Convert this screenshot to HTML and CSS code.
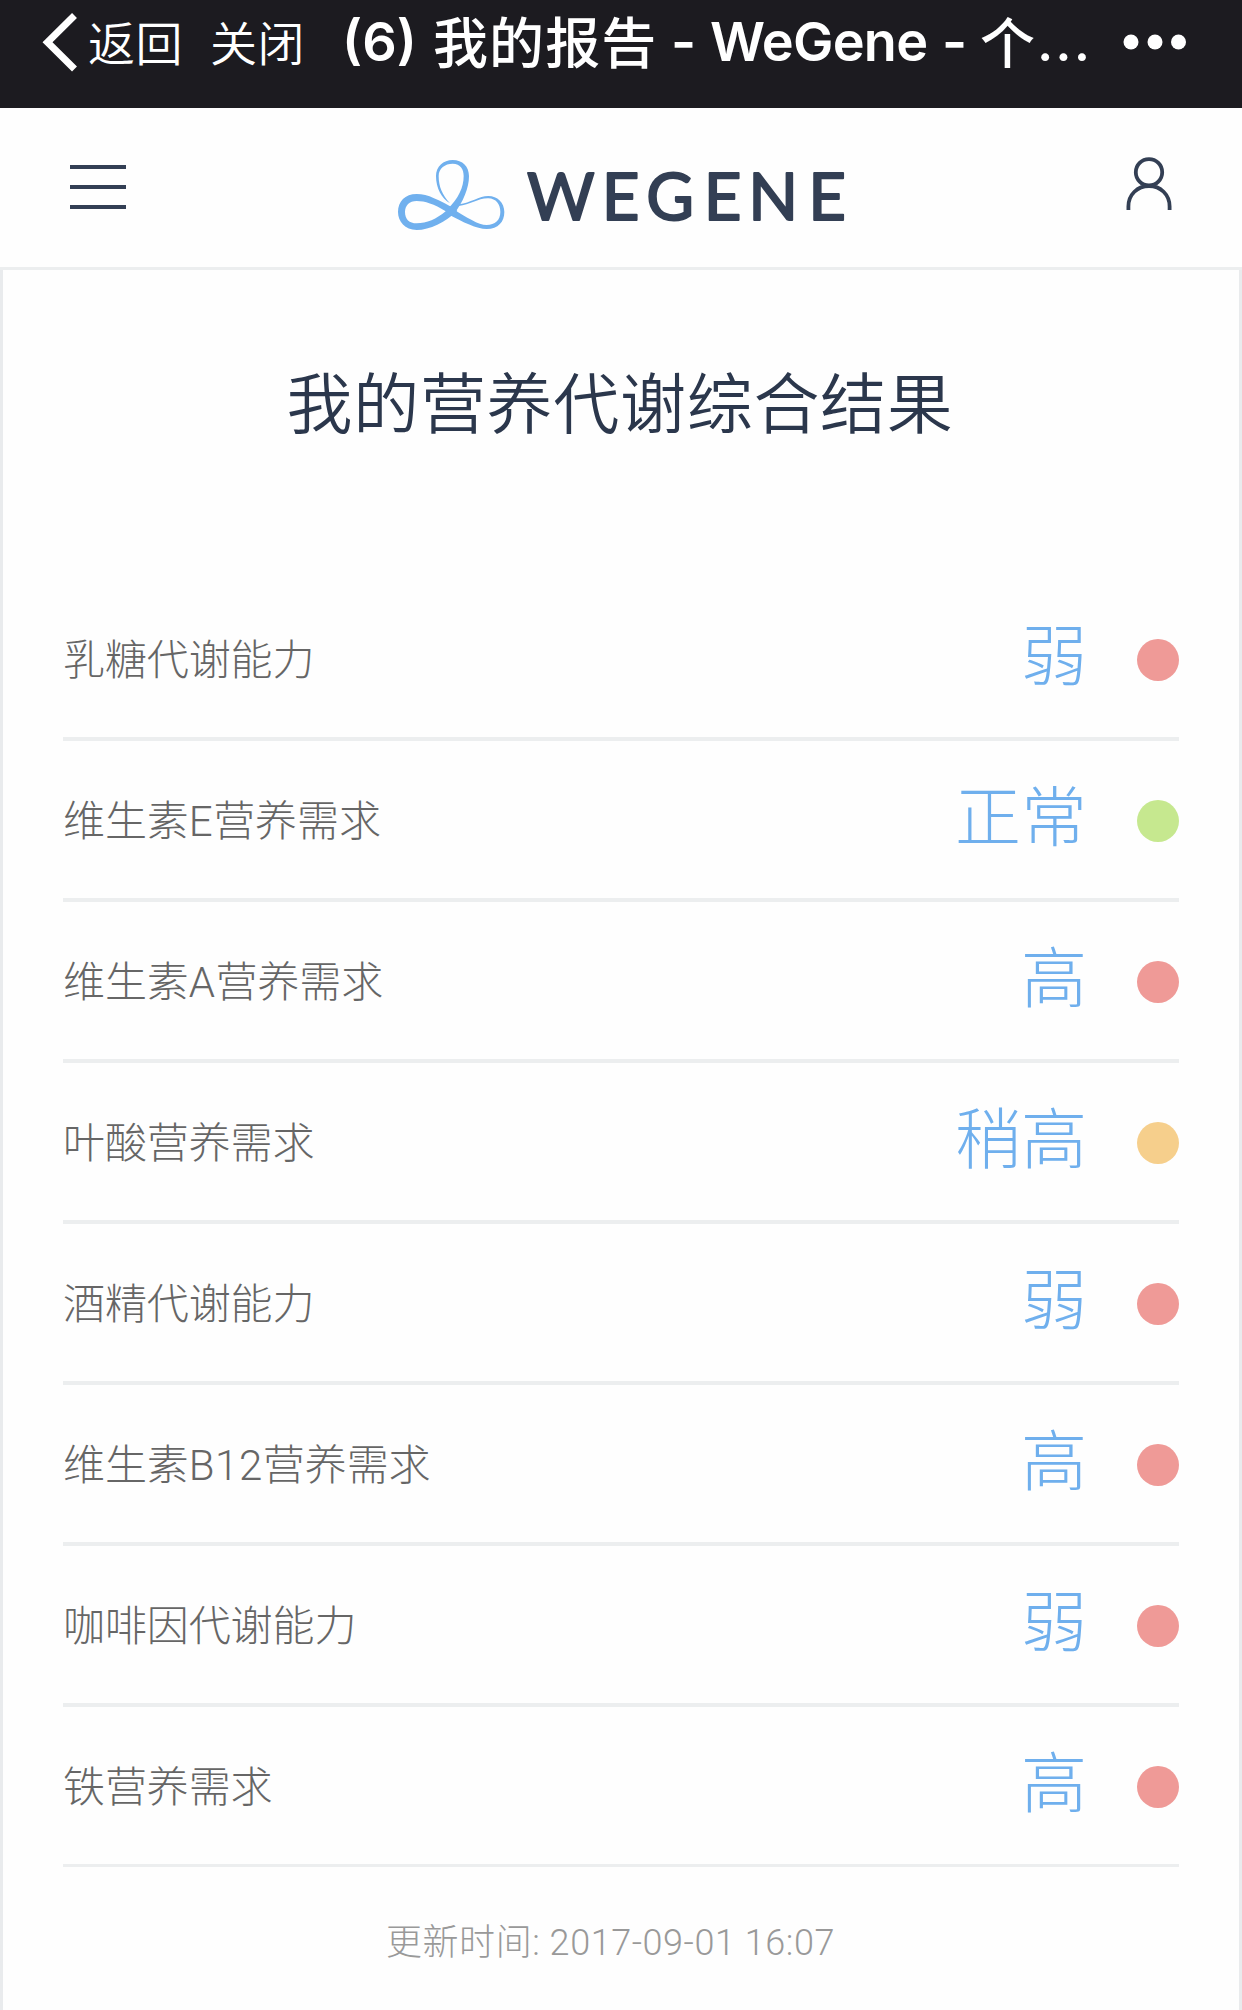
FILE: index.html
```html
<!DOCTYPE html>
<html lang="zh-CN">
<head>
    <meta charset="UTF-8">
    <meta name="viewport" content="width=device-width, initial-scale=1.0">
    <title>(6) 我的报告 - WeGene</title>
    <link rel="stylesheet" href="styles.css">
</head>
<body>
    <div class="navbar">
        <svg class="back-icon" width="36" height="60" viewBox="0 0 36 60"><path d="M33.5 3.5L6.5 30.2L33.5 57" fill="none" stroke="#fff" stroke-width="7"/></svg>
        <span class="nav-link">返回</span>
        <span class="nav-link nav-close">关闭</span>
        <div class="nav-title"><span class="nav-count">(6)</span><span class="nav-cn">我的报告</span><span class="nav-dash">-</span><span class="nav-en">WeGene</span><span class="nav-dash2">-</span><span class="nav-cn nav-last">个</span><span class="nav-dots">...</span></div>
        <svg class="more-icon" width="64" height="16" viewBox="0 0 64 16" fill="#fff"><circle cx="8" cy="8" r="7.5"/><circle cx="32" cy="8" r="7.5"/><circle cx="55.5" cy="8" r="7.5"/></svg>
    </div>

    <header class="header">
        <div class="menu-icon"><i></i><i></i><i></i></div>
        <svg class="logo" width="480" height="110" viewBox="0 0 1440 330">
            <g fill="#70b0ee">
                <path fill-rule="evenodd" d="M232 213C195 247 150 270 110 270C75 269 54 245 54 216C54 185 75 162 110 162C145 162 175 180 226 207ZM197 214C162 192 135 183 110 183C88 183 75 197 75 216C75 238 88 250 110 250C140 250 170 237 197 214Z"/>
                <path d="M203 222C250 247 290 267 320 267C355 267 373 245 373 216C373 188 352 168 325 168C298 168 270 189 238 193L236 198C270 195 295 174 325 175C348 176 361 192 361 216C361 240 345 255 320 255C295 255 260 232 218 207Z"/>
                <path d="M222 222C250 184 267 145 267 108C267 80 248 60 218 60C190 60 168 80 168 108C168 145 185 175 210 190C187 165 176 140 176 108C176 85 195 71 218 71C242 71 251 88 251 108C251 143 235 175 203 207Z"/>
            </g>
            <text class="logo-text" y="241" x="441 665 799 971 1105 1285">WEGENE</text>
        </svg>
        <svg class="user-icon" width="48" height="56" viewBox="0 0 48 56" fill="none" stroke="#333f54" stroke-width="3.8"><circle cx="24" cy="17.3" r="13.2"/><path d="M3.4 55V51.5C3.4 39.5 12.5 31 24 31S44.6 39.5 44.6 51.5V55"/></svg>
    </header>

    <div class="report">
        <h1 class="report-title">我的营养代谢综合结果</h1>
        <ul class="result-list">
            <li><span class="name">乳糖代谢能力</span><span class="value">弱</span><i class="dot red"></i></li>
            <li><span class="name">维生素<b>E</b>营养需求</span><span class="value">正常</span><i class="dot green"></i></li>
            <li><span class="name">维生素<b>A</b>营养需求</span><span class="value">高</span><i class="dot red"></i></li>
            <li><span class="name">叶酸营养需求</span><span class="value">稍高</span><i class="dot orange"></i></li>
            <li><span class="name">酒精代谢能力</span><span class="value">弱</span><i class="dot red"></i></li>
            <li><span class="name">维生素<b>B12</b>营养需求</span><span class="value">高</span><i class="dot red"></i></li>
            <li><span class="name">咖啡因代谢能力</span><span class="value">弱</span><i class="dot red"></i></li>
            <li><span class="name">铁营养需求</span><span class="value">高</span><i class="dot red"></i></li>
        </ul>
        <p class="update-time">更新时间: 2017-09-01 16:07</p>
    </div>
</body>
</html>
```
FILE: styles.css
```css
* {
    box-sizing: border-box;
}
body {
    margin: 0;
    font-family: Roboto, "Noto Sans CJK SC", sans-serif;
    font-weight: 300;
    background: #fefefe;
    color: #666;
}
.navbar {
    display: flex;
    align-items: center;
    height: 108px;
    padding: 0 0 24px 41px;
    background: #1c1b20;
    color: #fff;
    white-space: nowrap;
}
.back-icon {
    flex: none;
}
.nav-link {
    margin-left: 11px;
    width: 98px;
    padding-bottom: 2px;
    font-family: "Noto Sans CJK SC", sans-serif;
    font-size: 47px;
    line-height: 84px;
    letter-spacing: .5px;
    font-weight: 350;
}
.nav-close {
    margin-left: 24px;
}
.nav-title {
    display: flex;
    align-items: center;
    width: 780px;
    margin-left: 34px;
    font-family: Inter, "Noto Sans CJK SC", sans-serif;
    font-size: 54px;
    line-height: 84px;
    font-weight: 600;
}
.nav-count {
    width: 91px;
}
.nav-cn {
    width: 238px;
    padding-bottom: 7px;
    font-family: "Noto Sans CJK SC", sans-serif;
    font-size: 55px;
    letter-spacing: 1.1px;
    font-weight: 500;
}
.nav-dash {
    width: 39px;
}
.nav-en {
    width: 232px;
    letter-spacing: -.7px;
}
.nav-dash2 {
    width: 38px;
}
.nav-last {
    width: 57px;
}
.nav-dots {
    font-weight: 500;
    letter-spacing: 2px;
}
.more-icon {
    flex: none;
    margin-left: 1px;
}
.header {
    display: flex;
    align-items: flex-start;
    height: 162px;
    padding: 32px 0 0 70px;
    border-bottom: 3px solid #eceeef;
}
.menu-icon {
    display: flex;
    flex-direction: column;
    gap: 16px;
    width: 56px;
    margin-top: 25px;
}
.menu-icon i {
    height: 4px;
    background: #333f54;
}
.logo {
    margin-left: 254px;
}
.logo-text {
    font-family: Lato, sans-serif;
    font-size: 196px;
    font-weight: 400;
    fill: #333f54;
    stroke: #333f54;
    stroke-width: 6px;
    stroke-linejoin: round;
}
.user-icon {
    margin: 15px 0 0 265px;
}
.report {
    height: 1740px;
    padding: 81px 60px 0;
    border: 3px solid #e9ebed;
    border-width: 0 3px;
}
.report-title {
    margin: 0;
    font-family: "Noto Sans CJK SC", sans-serif;
    font-size: 66px;
    line-height: 96px;
    letter-spacing: .7px;
    font-weight: 350;
    text-align: center;
    text-indent: -2px;
    color: #2b374c;
}
.result-list {
    list-style: none;
    margin: 133px 0 0;
    padding: 0;
}
.result-list li {
    display: flex;
    height: 161px;
    border-bottom: 4px solid #eceeef;
}
.result-list li:last-child {
    height: 160px;
    border-bottom-width: 3px;
}
.name {
    flex: 1;
    padding-top: 47px;
    font-family: "Noto Sans CJK SC", sans-serif;
    font-size: 42px;
    line-height: 60px;
    letter-spacing: -.1px;
    font-weight: 300;
}
.name b {
    font-family: Roboto, sans-serif;
    font-weight: 300;
    letter-spacing: .6px;
}
.value {
    padding-top: 23px;
    font-family: "Noto Sans CJK SC", sans-serif;
    font-size: 66px;
    line-height: 96px;
    font-weight: 300;
    color: #6fafed;
}
.dot {
    width: 42px;
    height: 42px;
    margin: 59px 0 0 50px;
    border-radius: 50%;
}
.red {
    background: #ef9a97;
}
.green {
    background: #c6e88f;
}
.orange {
    background: #f6cf8c;
}
.update-time {
    margin: 50px 0 0;
    padding-right: 21px;
    font-size: 36px;
    line-height: 52px;
    letter-spacing: .55px;
    text-align: center;
    color: #999;
}
```
